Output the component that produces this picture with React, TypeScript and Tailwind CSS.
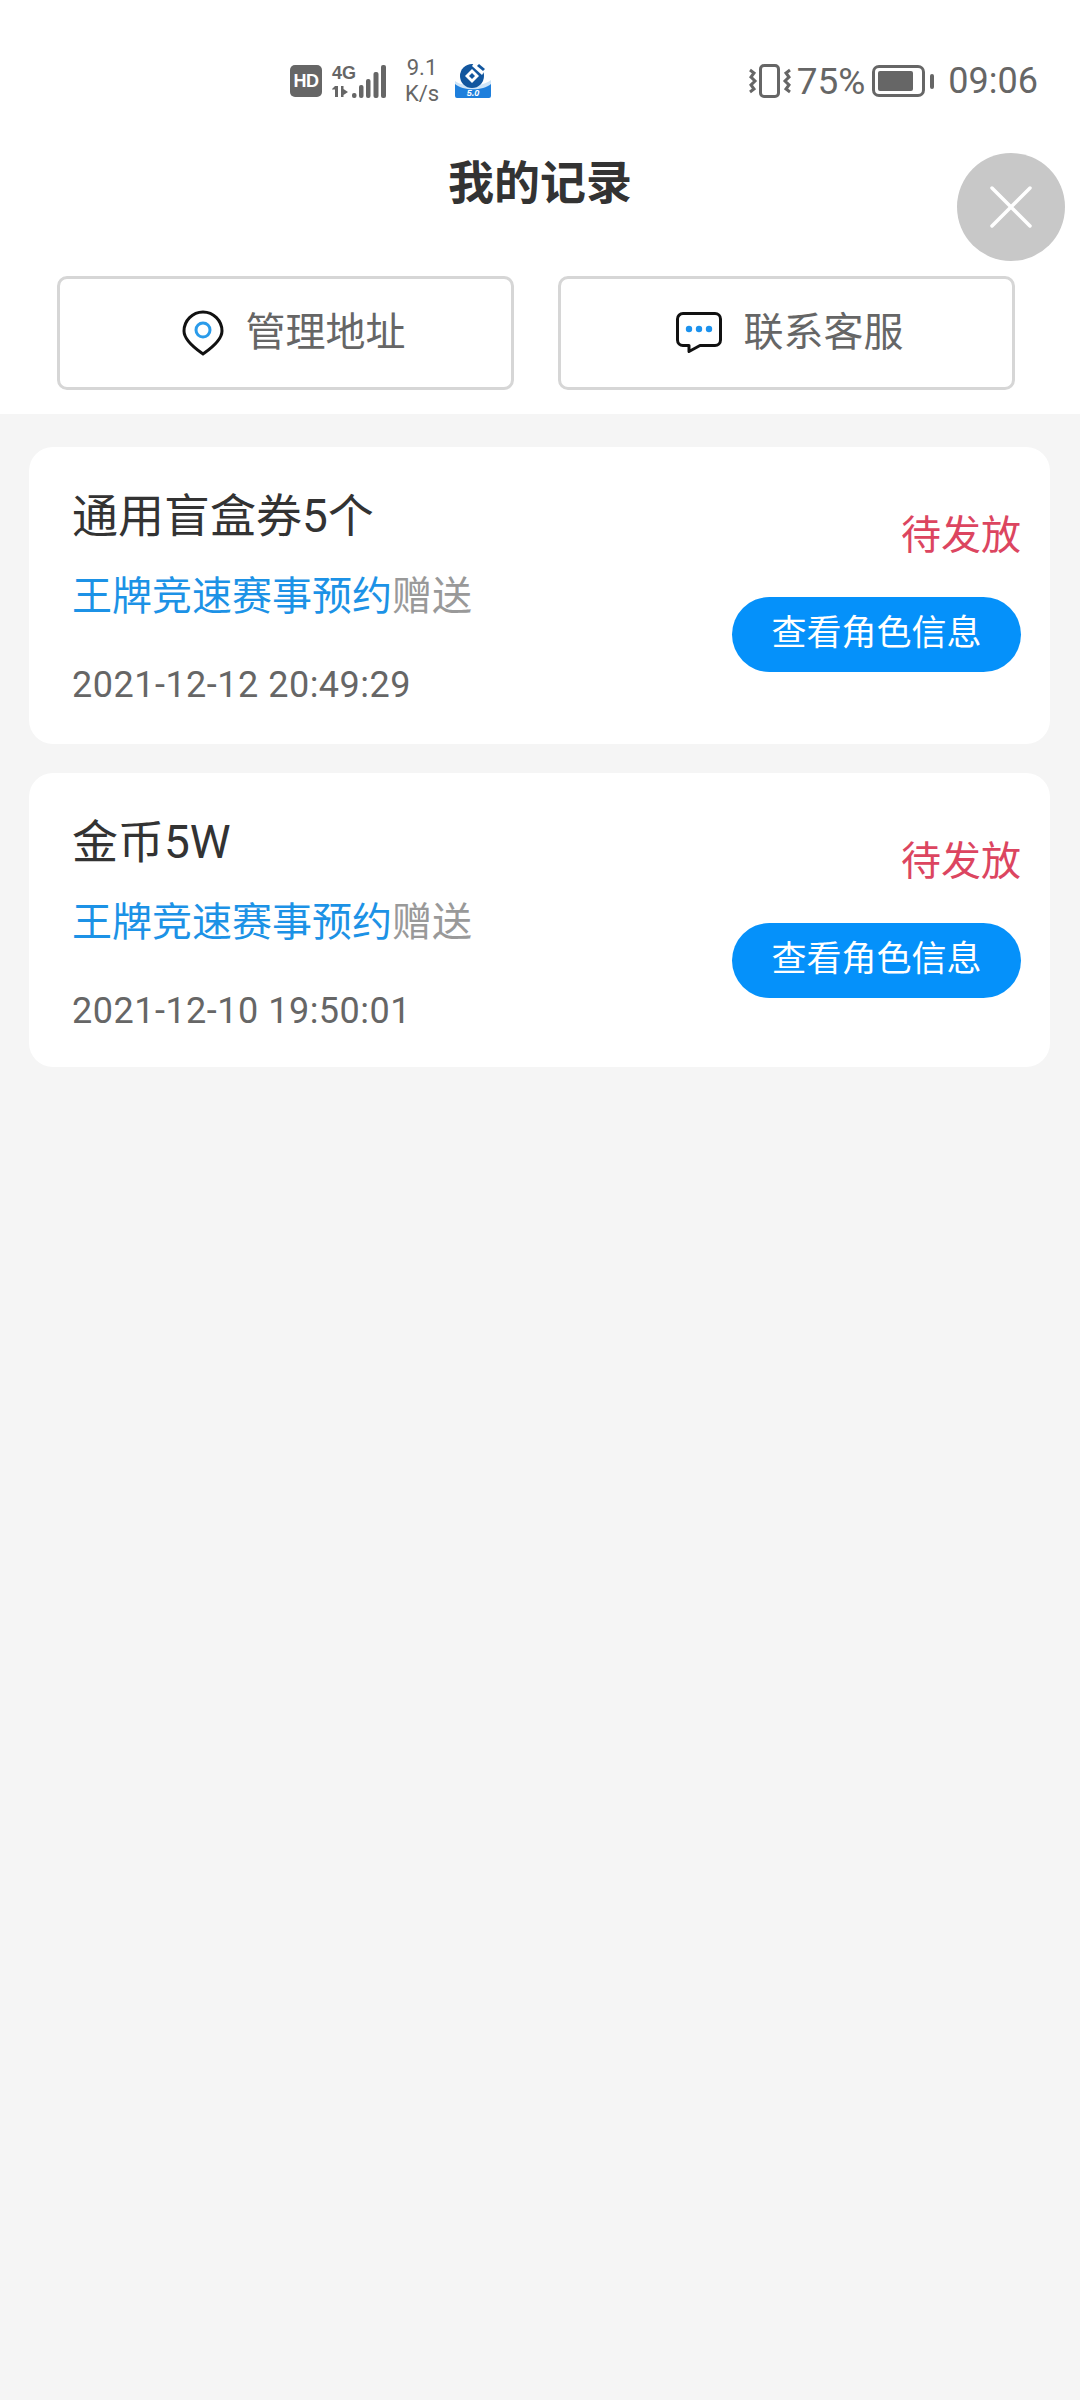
// App.tsx
const font = "font-['Roboto','Noto_Sans_CJK_SC',sans-serif]";

function HdIcon() {
  return (
    <div className="flex h-[32px] w-[32px] items-center justify-center rounded-[5px] bg-[#666666] font-['Liberation_Sans',sans-serif] text-[18px] font-bold leading-none tracking-[-0.5px] text-white">
      HD
    </div>
  );
}

function SignalIcon() {
  return (
    <div className="relative h-[33px] w-[56px]">
      {/* 4G is real text, it sits over the drawn arrows and bars */}
      <span className="absolute left-0 top-[-2px] font-['Liberation_Sans',sans-serif] text-[18px] font-bold leading-[20px] text-[#666666]">4G</span>
      <svg width="56" height="33" viewBox="0 0 56 33" fill="#666666">
        <path d="M3 21h3v11H3zM0 24l3-3v3.500H0zM9 21h2.500v3l4.500 3-4.500 3v2H9z" />
        <rect x="20" y="28" width="4.500" height="5" rx="2" />
        <rect x="27" y="20" width="4.500" height="13" rx="2" />
        <rect x="34" y="14" width="4.500" height="19" rx="2" />
        <rect x="41.500" y="7" width="5" height="26" rx="2" />
        <rect x="49" y="0" width="5" height="33" rx="2" />
      </svg>
    </div>
  );
}

function BankLogo() {
  return (
    <svg width="38" height="36" viewBox="0 0 38 36">
      <path d="M1 20c8 7 28 7 36-1v14a2 2 0 0 1-2 2H3a2 2 0 0 1-2-2z" fill="#1e7fdc" />
      <path d="M1 18c8 6 28 6 36-1v4c-8 7-28 7-36 0z" fill="#cfe5f8" />
      <circle cx="18" cy="13" r="12" fill="#12569e" />
      <path d="M18 6l7 7-7 7-7-7z" fill="#ffffff" />
      <path d="M18 10l3 3-3 3-3-3z" fill="#12569e" />
      <path d="M20 0l11 7-3 5-10-9z" fill="#ffffff" />
      <path d="M25 1l6 5-2 2-6-5z" fill="#12569e" />
      <text x="19" y="33" fontSize="9" fontWeight="700" fontStyle="italic" fill="#ffffff" textAnchor="middle" fontFamily="Liberation Sans">5.0</text>
    </svg>
  );
}

function VibrateIcon() {
  return (
    <svg width="42" height="34" viewBox="0 0 42 34" fill="none" stroke="#666666">
      <rect x="11.500" y="1.500" width="18" height="31" rx="3.500" strokeWidth="3" />
      <path d="M1 6l4 3-3 4 4 4-4 4 3 4-4 3" strokeWidth="3" />
      <path d="M41 6l-4 3 3 4-4 4 4 4-3 4 4 3" strokeWidth="3" />
    </svg>
  );
}

function BatteryIcon() {
  return (
    <div className="flex items-center gap-[5px]">
      <div className="h-[32px] w-[53px] rounded-[7px] border-[3px] border-[#666666] p-[3px]">
        <div className="h-full w-[35px] rounded-[2px] bg-[#666666]" />
      </div>
      <div className="h-[15px] w-[4px] rounded-[2px] bg-[#666666]" />
    </div>
  );
}

function PinIcon() {
  return (
    <svg width="42" height="46" viewBox="0 0 42 46" fill="none">
      <path d="M21 44 C20 43 2 32 2 21 A19 19 0 0 1 40 21 C40 32 22 43 21 44Z" stroke="#111111" strokeWidth="3" strokeLinejoin="round" />
      <circle cx="21" cy="20" r="7" stroke="#2a9bea" strokeWidth="3" />
    </svg>
  );
}

function ChatIcon() {
  return (
    <svg width="46" height="42" viewBox="0 0 46 42" fill="none">
      <path d="M7 1.500h32a5.500 5.500 0 0 1 5.500 5.500v21a5.500 5.500 0 0 1-5.500 5.500H24l-11 6v-6H7A5.500 5.500 0 0 1 1.500 28V7A5.500 5.500 0 0 1 7 1.500Z" stroke="#111111" strokeWidth="3" strokeLinejoin="round" />
      <circle cx="13" cy="17" r="3.200" fill="#1c92ee" />
      <circle cx="23" cy="17" r="3.200" fill="#1c92ee" />
      <circle cx="33" cy="17" r="3.200" fill="#1c92ee" />
    </svg>
  );
}

function StatusBar() {
  return (
    <div className="flex h-[80px] items-center pt-[2px] pl-[290px] pr-[42px] text-[#666666]">
      <HdIcon />
      <div className="ml-[10px]">
        <SignalIcon />
      </div>
      <div className="ml-[15px] w-[38px] text-center text-[22px] leading-[26px]">
        <div>9.1</div>
        <div>K/s</div>
      </div>
      <div className="ml-[13px]">
        <BankLogo />
      </div>
      <div className="ml-auto flex items-center">
        <VibrateIcon />
        <span className="ml-[6px] text-[37px] leading-none">75%</span>
        <div className="ml-[7px]">
          <BatteryIcon />
        </div>
        <span className="ml-[14px] text-[36px] leading-none">09:06</span>
      </div>
    </div>
  );
}

function ActionButton({ icon, label, inset }: { icon: React.ReactNode; label: string; inset: string }) {
  return (
    <div className={`flex h-[114px] w-[457px] items-center justify-center gap-[22px] rounded-[10px] border-[3px] border-[#d6d6d6] bg-white text-[40px] text-[#666666] ${inset}`}>
      {icon}
      <span>{label}</span>
    </div>
  );
}

function RecordCard({ title, date, height }: { title: string; date: string; height: string }) {
  return (
    <div className={`flex justify-between rounded-[24px] bg-white pl-[43px] pr-[29px] ${height}`}>
      <div>
        <div className="mt-[41px] text-[46px] leading-[56px] text-[#333333]">{title}</div>
        <div className="mt-[28px] text-[40px] leading-[50px] text-[#999999]">
          <span className="text-[#1c92e6]">王牌竞速赛事预约</span>赠送
        </div>
        <div className="mt-[41px] text-[36px] leading-[44px] tracking-[0.5px] text-[#666666]">{date}</div>
      </div>
      <div className="flex flex-col items-end">
        <div className="mt-[64px] text-[40px] leading-[50px] text-[#dc4560]">待发放</div>
        <div className="mt-[36px] flex h-[75px] w-[289px] items-center justify-center rounded-full bg-[#0591fa] text-[35px] text-white">
          查看角色信息
        </div>
      </div>
    </div>
  );
}

export default function App() {
  return (
    <div className={`relative flex min-h-[2400px] w-[1080px] flex-col bg-[#f5f5f5] ${font}`}>
      <div className="bg-white pt-[40px]">
        <StatusBar />
        <div className="mt-[33px] text-center text-[46px] font-bold leading-[60px] text-[#333333]">我的记录</div>
        <div className="mt-[63px] flex justify-between pl-[57px] pr-[65px] pb-[24px]">
          <ActionButton icon={<PinIcon />} label="管理地址" inset="pl-[16px]" />
          <ActionButton icon={<ChatIcon />} label="联系客服" inset="pl-[6px]" />
        </div>
      </div>

      {/* close floats over the header */}
      <div className="absolute left-[957px] top-[153px] flex h-[108px] w-[108px] items-center justify-center rounded-full bg-[#c8c8c8]">
        <svg width="44" height="44" viewBox="0 0 44 44" stroke="#ffffff" strokeWidth="3.500" strokeLinecap="round">
          <path d="M3 3l38 38M41 3L3 41" />
        </svg>
      </div>

      <div className="flex flex-col gap-[29px] pl-[29px] pr-[30px] pt-[33px]">
        <RecordCard title="通用盲盒券5个" date="2021-12-12 20:49:29" height="h-[297px]" />
        <RecordCard title="金币5W" date="2021-12-10 19:50:01" height="h-[294px]" />
      </div>
    </div>
  );
}
